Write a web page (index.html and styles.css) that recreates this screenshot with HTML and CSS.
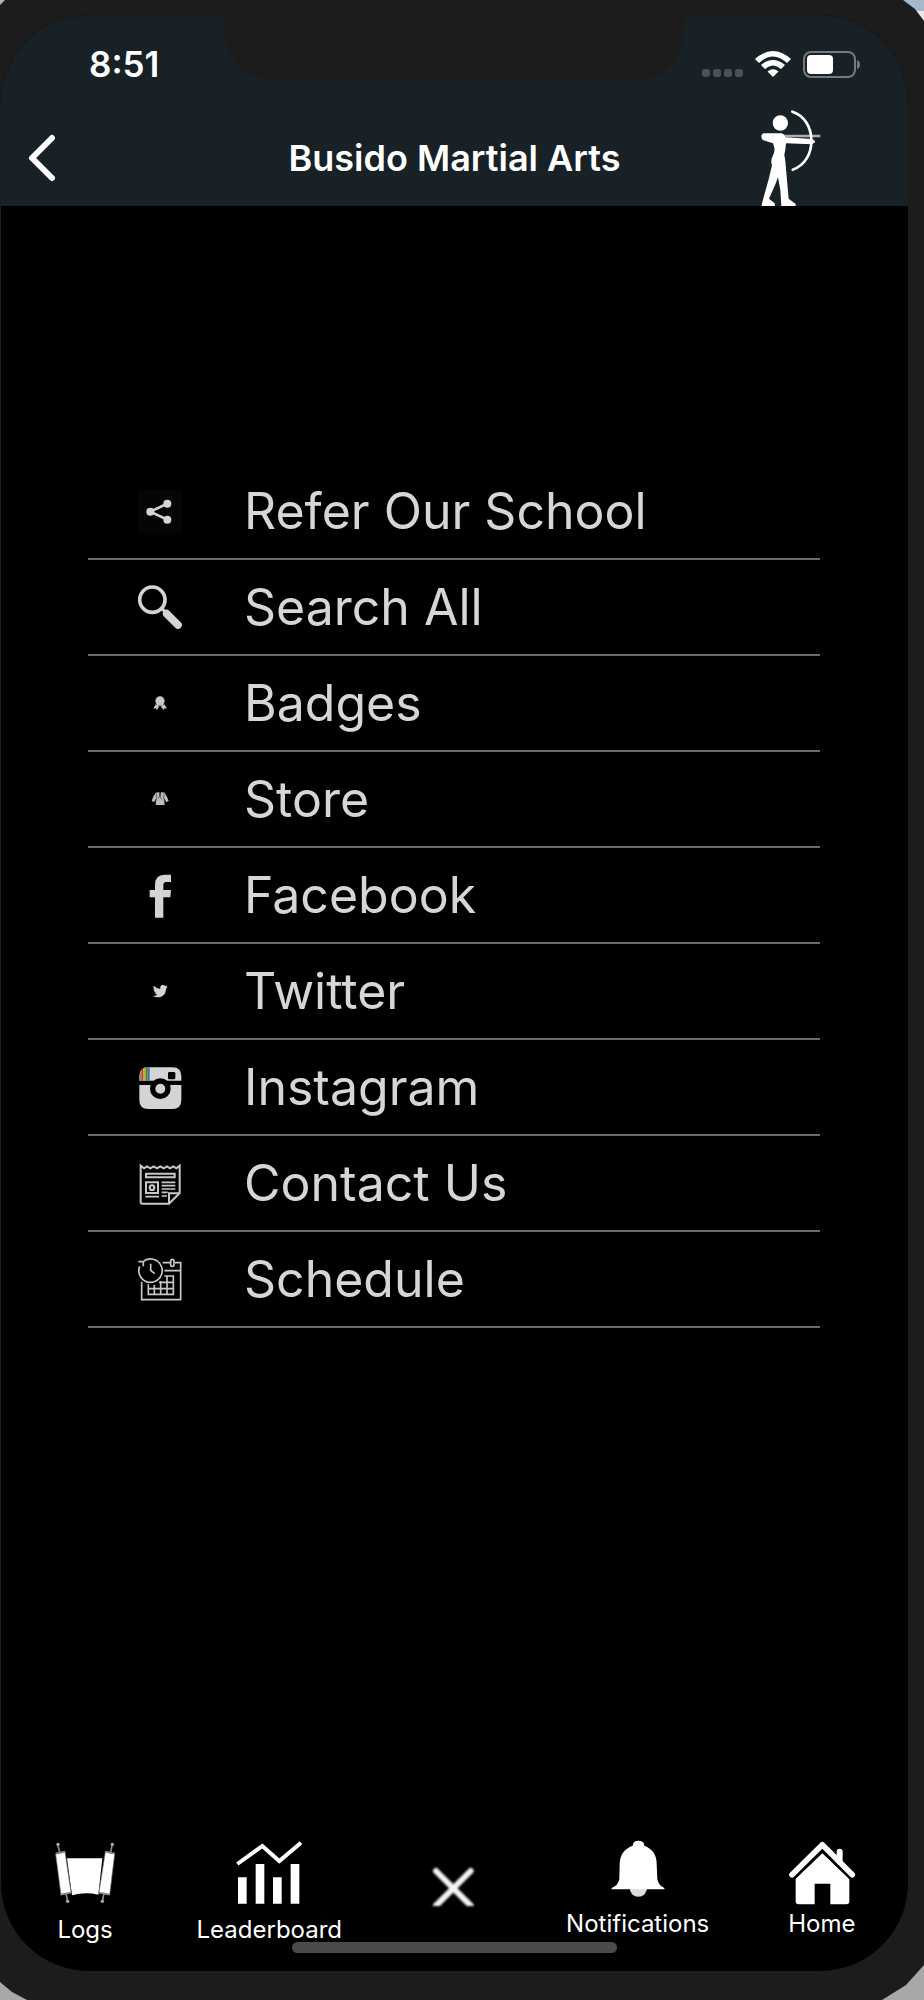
FILE: index.html
```html
<!DOCTYPE html>
<html lang="en">
<head>
    <meta charset="UTF-8">
    <meta name="viewport" content="width=device-width, initial-scale=1.0">
    <title>Busido Martial Arts</title>
    <link rel="stylesheet" href="styles.css">
</head>
<body>

<div class="device">
    <div class="notch"></div>
    <div class="screen">

        <header>
            <div class="status-bar">
                <span class="time">8:51</span>
                <div class="status-icons">
                    <div class="signal"><i></i><i></i><i></i><i></i></div>
                    <svg class="wifi" viewBox="0 0 36 27" fill="#fff">
                        <path d="M0 8Q18-8 36 8L32 12Q18-1 4 12Z"/>
                        <path d="M6 14Q18 4 30 14L26 18Q18 11 10 18Z"/>
                        <path d="M12.500 20.500Q18 16 23.500 20.500L18 26Z"/>
                    </svg>
                    <svg class="battery" viewBox="0 0 58 27">
                        <rect x="1" y="1" width="51" height="25" rx="7" fill="none" stroke="#747a7d" stroke-width="2"/>
                        <rect x="4" y="4" width="26" height="19" rx="4" fill="#fff"/>
                        <path d="M54 9Q57 10 57 13.500T54 18Z" fill="#747a7d"/>
                    </svg>
                </div>
            </div>
            <nav class="nav-bar">
                <button class="back" aria-label="Back">
                    <svg viewBox="0 0 28 48"><path d="M24 4L4 24L24 44" fill="none" stroke="#fff" stroke-width="6" stroke-linecap="round" stroke-linejoin="round"/></svg>
                </button>
                <h1>Busido Martial Arts</h1>
                <svg class="archer" viewBox="60 60 183 288">
                    <circle cx="121" cy="99" r="23" fill="#fff"/>
                    <path d="M130 138H241" stroke="#a9aeb0" stroke-width="8"/>
                    <path d="M157 65C232 88 234 214 158 239" fill="none" stroke="#fff" stroke-width="8" stroke-linecap="round"/>
                    <path d="M72 130H126Q132 131 136 142L215 147Q226 150 225 157L216 163L138 160Q137 180 133 194Q137 215 138 237L146 326L167 342V348H124L121 300L114 262L105 286L87 326L104 340L105 348H65L66 340L86 268L96 226Q91 212 98 198Q105 186 103 174L99 160L70 151Q64 147 64 138Q65 130 72 130Z" fill="#fff"/>
                </svg>
            </nav>
        </header>

        <main>
            <ul class="menu">
                <li><a href="#">
                    <svg viewBox="173 84 132 132">
                        <rect x="174" y="87" width="130" height="130" fill="#070408"/>
                        <path d="M261 128L210 152L261 176" fill="none" stroke="#d4d4d4" stroke-width="8"/>
                        <g fill="#d4d4d4"><circle cx="261" cy="128" r="12"/><circle cx="210" cy="152" r="12"/><circle cx="261" cy="176" r="12"/></g>
                    </svg>
                    <span>Refer Our School</span>
                </a></li>
                <li><a href="#">
                    <svg viewBox="173 374 132 132">
                        <circle cx="216" cy="418" r="38" fill="none" stroke="#d4d4d4" stroke-width="11"/>
                        <path d="M242 442L260 460" stroke="#d4d4d4" stroke-width="9"/>
                        <path d="M259 460L293 494" stroke="#d4d4d4" stroke-width="23" stroke-linecap="round"/>
                    </svg>
                    <span>Search All</span>
                </a></li>
                <li><a href="#">
                    <svg viewBox="173 660 132 132" fill="#c8c8c8">
                        <circle cx="239" cy="720" r="14"/>
                        <path d="M226 730L219 743L226 742L230 747L237 734ZM252 730L260 743L253 742L249 747L241 734Z"/>
                    </svg>
                    <span>Badges</span>
                </a></li>
                <li><a href="#">
                    <svg viewBox="173 78 132 132" fill="#bcbcbc">
                        <path d="M226 125L237 123L239 138L242 123L253 125Q260 135 265 149L258 154L251 142L253 162H226L228 142L221 154L214 149Q219 134 226 125Z"/>
                        <path d="M228 128L229 142L225 153M251 128L250 142L254 153M236 124L243 145M242 124L235 142" stroke="#333" stroke-width="2" fill="none"/>
                    </svg>
                    <span>Store</span>
                </a></li>
                <li><a href="#">
                    <svg viewBox="173 366 132 132" overflow="visible">
                        <path d="M224 500V439H208V417H224V402Q224 371 253 371H272V393H258Q249 393 249 403V417H272L270 439H249V500Z" fill="#d4d4d4"/>
                    </svg>
                    <span>Facebook</span>
                </a></li>
                <li><a href="#">
                    <svg viewBox="173 654 132 132">
                        <path d="M220 704Q229 713 240 714Q238 704 246 702Q251 701 255 705L261 703L258 708L262 708L257 713C257 731 245 739 231 739Q224 739 218 735Q226 735 231 731Q225 730 223 725H227Q220 722 219 715L223 716Q217 711 220 704Z" fill="#d4d4d4"/>
                    </svg>
                    <span>Twitter</span>
                </a></li>
                <li><a href="#">
                    <svg viewBox="173 72 132 132">
                        <path d="M177 119V106Q177 79 204 79H276Q303 79 303 106V119Z" fill="#d4d4d4"/>
                        <path d="M177 132H303V177Q303 204 276 204H204Q177 204 177 177Z" fill="#d4d4d4"/>
                        <path d="M183 119V86L189 82V119Z" fill="#b9432c"/>
                        <path d="M189 119V82L196 79V119Z" fill="#d9a520"/>
                        <path d="M196 79H202V119H196Z" fill="#3c8c35"/>
                        <path d="M202 79H208V119H202Z" fill="#3775a8"/>
                        <path d="M177 119V102L183 86V119Z" fill="#94857b"/>
                        <rect x="263" y="93" width="22" height="22" rx="4" fill="#000"/>
                        <circle cx="240" cy="143" r="23" fill="#d4d4d4" stroke="#000" stroke-width="16"/>
                    </svg>
                    <span>Instagram</span>
                </a></li>
                <li><a href="#">
                    <svg viewBox="173 360 132 132" fill="none" stroke="#c8c8c8" stroke-width="6">
                        <path d="M181 374V484Q181 488 186 488H266L298 456V374L288 382L279 376L269 382L260 376L250 382L240 376L230 382L220 376L210 382L200 376L191 382Z"/>
                        <path d="M266 488V457H298"/>
                        <path d="M197 398H283V409H197Z"/>
                        <path d="M197 424H233V456H197Z"/>
                        <circle cx="215" cy="440" r="7"/>
                        <path d="M244 424H285M244 434H285M244 444H285M244 454H262M244 465H260M195 467H236" stroke-width="5"/>
                    </svg>
                    <span>Contact Us</span>
                </a></li>
                <li><a href="#">
                    <svg viewBox="173 648 132 132" fill="none" stroke="#c8c8c8" stroke-width="5">
                        <path d="M184 722V776H301V665H284M269 665H247M252 689H301"/>
                        <rect x="271" y="655" width="10" height="21" rx="5"/>
                        <path d="M187 663A35 35 0 1 1 178 676M174 662H189V676"/>
                        <path d="M211 668V688L223 698"/>
                        <path d="M204 730V760H279V705H252M204 743H279M236 724H279M222 732V760M241 720V760M260 705V760"/>
                    </svg>
                    <span>Schedule</span>
                </a></li>
            </ul>
        </main>

        <footer class="tab-bar">
            <a href="#" class="tab low">
                <svg viewBox="161 120 198 198" fill="#fff">
                    <path d="M206 175H312L300 284Q260 275 221 286Z"/>
                    <g stroke="#777" stroke-width="2">
                        <path d="M172 162L200 156L218 277L188 284Z"/>
                        <path d="M321 156L349 162L334 284L302 277Z"/>
                    </g>
                    <path d="M178 132L184 157M342 132L337 157M204 283L208 306M316 283L312 306M172 161L201 155M320 155L350 161M187 284L218 278M302 278L334 284" stroke="#8c8c8c" stroke-width="5"/>
                    <g fill="#aaa"><circle cx="179" cy="133" r="5"/><circle cx="342" cy="133" r="5"/><circle cx="208" cy="304" r="5"/><circle cx="312" cy="304" r="5"/></g>
                </svg>
                <span>Logs</span>
            </a>
            <a href="#" class="tab low">
                <svg viewBox="709 120 198 198">
                    <path d="M713 192L788 138L839 183L904 128" fill="none" stroke="#fff" stroke-width="12"/>
                    <path d="M715 232H741V311H715ZM768 192H794V311H768ZM820 232H846V311H820ZM873 192H899V311H873Z" fill="#fff"/>
                </svg>
                <span>Leaderboard</span>
            </a>
            <button class="tab close" aria-label="Close">
                <svg viewBox="1266 120 198 198"><path d="M1314 213L1418 317M1418 213L1314 317" stroke="#f4f4f4" stroke-width="18" stroke-linecap="round"/></svg>
            </button>
            <a href="#" class="tab">
                <svg viewBox="425 120 198 198">
                    <circle cx="525" cy="264" r="26" fill="#ddd"/>
                    <path d="M508 137Q509 122 525 122Q542 122 543 137Q580 151 580 192L582 238Q586 257 603 264V268H445V264Q464 257 468 238L469 192Q470 151 508 137Z" fill="#fff"/>
                </svg>
                <span>Notifications</span>
            </a>
            <a href="#" class="tab">
                <svg viewBox="982 120 198 198">
                    <path d="M1002 236L1082 160L1163 236V304Q1163 313 1154 313H1106V251H1059V313H1011Q1002 313 1002 304Z" fill="#fff"/>
                    <path d="M991 227L1082 138L1172 227" fill="none" stroke="#000" stroke-width="28"/>
                    <path d="M991 224L1082 134L1172 224" fill="none" stroke="#fff" stroke-width="17" stroke-linecap="round" stroke-linejoin="round"/>
                    <path d="M1134 155V185" stroke="#fff" stroke-width="18" stroke-linecap="round"/>
                </svg>
                <span>Home</span>
            </a>
        </footer>

        <div class="home-indicator"></div>
    </div>
</div>

</body>
</html>
```
FILE: styles.css
```css
* {
    box-sizing: border-box;
}

body {
    margin: 0;
    font-family: Inter, "Liberation Sans", sans-serif;
    background: linear-gradient(#a5b8cc 0 11px, #e6e6e6 11px 50%, #a8a8a8 50%);
    color: white;
}

/* Phone frame */
.device {
    position: relative;
    display: flex;
    min-height: 100vh;
    padding: 15px 16px 29px 1px;
    background: #1c1c1c;
    clip-path: polygon(0 5px, 5px 0, calc(100% - 21px) 0, calc(100% - 9px) 9px, 100% 21px,
        100% calc(100% - 35px), calc(100% - 18px) calc(100% - 15px), calc(100% - 42px) 100%,
        27px 100%, 12px calc(100% - 8px), 0 calc(100% - 18px));
}

.screen {
    position: relative;
    flex: 1;
    display: flex;
    flex-direction: column;
    background: #000;
    border-radius: 88px;
    overflow: hidden;
}

.notch {
    position: absolute;
    z-index: 1;
    top: 0;
    left: 0;
    right: 15px;
    margin: 0 auto;
    width: 459px;
    height: 80px;
    background: #1c1c1c;
    border-radius: 0 0 48px 48px;
}

.notch::before,
.notch::after {
    content: "";
    position: absolute;
    top: 15px;
    width: 10px;
    height: 10px;
}

.notch::before {
    right: 100%;
    background: radial-gradient(circle at 0 100%, transparent 9px, #1c1c1c 10px);
}

.notch::after {
    left: 100%;
    background: radial-gradient(circle at 100% 100%, transparent 9px, #1c1c1c 10px);
}

/* Header */
header {
    background: #172126;
}

.status-bar {
    display: flex;
    justify-content: space-between;
    align-items: center;
    height: 95px;
    padding: 3px 47px 0 88px;
}

.time {
    font-size: 35px;
    font-weight: 600;
}

.status-icons {
    display: flex;
    align-items: center;
    gap: 12px;
}

.signal {
    display: flex;
    gap: 3px;
    padding-top: 18px;
}

.signal i {
    width: 8px;
    height: 8px;
    border-radius: 3px;
    background: #4b5356;
}

.wifi {
    width: 36px;
    height: 27px;
}

.battery {
    width: 58px;
    height: 27px;
}

.nav-bar {
    display: grid;
    grid-template-columns: 1fr auto 1fr;
    align-items: center;
    height: 96px;
    padding: 0 27px;
}

.back {
    justify-self: start;
    padding: 0;
    border: 0;
    background: none;
    cursor: pointer;
}

.back svg {
    display: block;
    width: 28px;
    height: 48px;
}

h1 {
    margin: 0;
    font-size: 36px;
    font-weight: 600;
}

.archer {
    justify-self: end;
    margin-right: 60px;
    width: 61px;
    height: 96px;
}

/* Menu */
main {
    flex: 1;
    padding: 258px 88px 64px 87px;
}

.menu {
    list-style: none;
    margin: 0;
    padding: 0;
}

.menu a {
    display: flex;
    align-items: center;
    gap: 62px;
    height: 96px;
    padding-left: 50px;
    border-bottom: 2px solid #6b6b6b;
    color: #d6d6d6;
    font-size: 50px;
    text-decoration: none;
}

.menu svg {
    flex: none;
    width: 44px;
    height: 44px;
}

/* Bottom tabs */
.tab-bar {
    display: grid;
    grid-template-columns: repeat(5, 1fr);
    margin: 0 -6px 0 -8px;
    padding-bottom: 27px;
}

.tab {
    display: flex;
    flex-direction: column;
    align-items: center;
    gap: 4px;
    padding: 0;
    border: 0;
    background: none;
    color: white;
    font-size: 24px;
    line-height: 28px;
    text-decoration: none;
}

.tab.low {
    gap: 10px;
}

.tab svg {
    width: 66px;
    height: 66px;
}

.close svg {
    filter: blur(1px);
}

.home-indicator {
    position: absolute;
    bottom: 18px;
    left: 0;
    right: 0;
    margin: 0 auto;
    width: 325px;
    height: 11px;
    border-radius: 6px;
    background: #4b4b4b;
}
```
